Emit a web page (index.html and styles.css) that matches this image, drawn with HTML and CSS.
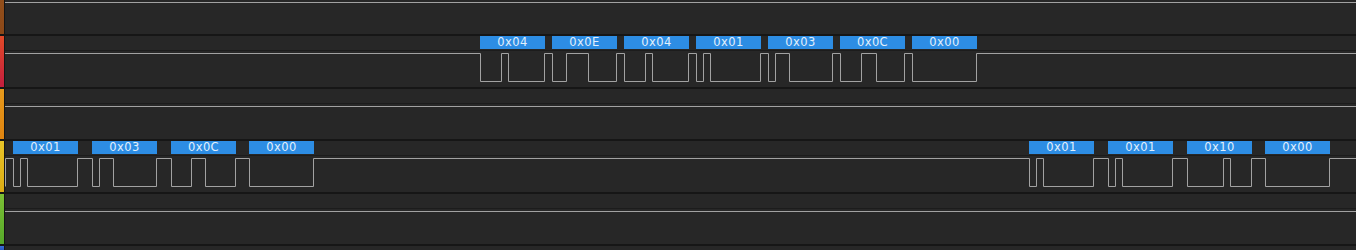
FILE: index.html
```html
<!DOCTYPE html>
<html>
<head>
<meta charset="utf-8">
<link rel="stylesheet" href="styles.css">
</head>
<body>
<div class="channels">
  <div class="channel ch0">
    <div class="strip"></div>
    <div class="lane">
      <div class="band"></div>
      <div class="wave"><div class="flat"></div></div>
    </div>
  </div>

  <div class="channel ch1">
    <div class="strip"></div>
    <div class="lane">
      <div class="band">
        <span class="byte" style="left:475px">0x04</span>
        <span class="byte" style="left:547px">0x0E</span>
        <span class="byte" style="left:619px">0x04</span>
        <span class="byte" style="left:691px">0x01</span>
        <span class="byte" style="left:763px">0x03</span>
        <span class="byte" style="left:835px">0x0C</span>
        <span class="byte" style="left:907px">0x00</span>
      </div>
      <div class="wave">
        <svg class="sig" viewBox="5 0 1351 35" width="1351" height="35">
          <polyline points="5,2.5 480.5,2.5 480.5,30.5 501.5,30.5 501.5,2.5 508.5,2.5 508.5,30.5 544.5,30.5 544.5,2.5 552.5,2.5 552.5,30.5 566.5,30.5 566.5,2.5 588.5,2.5 588.5,30.5 616.5,30.5 616.5,2.5 624.5,2.5 624.5,30.5 645.5,30.5 645.5,2.5 652.5,2.5 652.5,30.5 688.5,30.5 688.5,2.5 696.5,2.5 696.5,30.5 703.5,30.5 703.5,2.5 710.5,2.5 710.5,30.5 760.5,30.5 760.5,2.5 768.5,2.5 768.5,30.5 775.5,30.5 775.5,2.5 789.5,2.5 789.5,30.5 832.5,30.5 832.5,2.5 840.5,2.5 840.5,30.5 861.5,30.5 861.5,2.5 876.5,2.5 876.5,30.5 904.5,30.5 904.5,2.5 912.5,2.5 912.5,30.5 976.5,30.5 976.5,2.5 1356,2.5"/>
        </svg>
      </div>
    </div>
  </div>

  <div class="channel ch2">
    <div class="strip"></div>
    <div class="lane">
      <div class="band"></div>
      <div class="wave"><div class="flat"></div></div>
    </div>
  </div>

  <div class="channel ch3">
    <div class="strip"></div>
    <div class="lane">
      <div class="band">
        <span class="byte" style="left:8px">0x01</span>
        <span class="byte" style="left:87px">0x03</span>
        <span class="byte" style="left:166px">0x0C</span>
        <span class="byte" style="left:244px">0x00</span>
        <span class="byte" style="left:1024px">0x01</span>
        <span class="byte" style="left:1103px">0x01</span>
        <span class="byte" style="left:1182px">0x10</span>
        <span class="byte" style="left:1260px">0x00</span>
      </div>
      <div class="wave">
        <svg class="sig" viewBox="5 0 1351 35" width="1351" height="35">
          <polyline points="5.5,30.5 5.5,2.5 13.5,2.5 13.5,30.5 20.5,30.5 20.5,2.5 27.5,2.5 27.5,30.5 77.5,30.5 77.5,2.5 92.5,2.5 92.5,30.5 99.5,30.5 99.5,2.5 113.5,2.5 113.5,30.5 156.5,30.5 156.5,2.5 171.5,2.5 171.5,30.5 191.5,30.5 191.5,2.5 205.5,2.5 205.5,30.5 235.5,30.5 235.5,2.5 249.5,2.5 249.5,30.5 313.5,30.5 313.5,2.5 1029.5,2.5 1029.5,30.5 1036.5,30.5 1036.5,2.5 1043.5,2.5 1043.5,30.5 1093.5,30.5 1093.5,2.5 1108.5,2.5 1108.5,30.5 1115.5,30.5 1115.5,2.5 1122.5,2.5 1122.5,30.5 1172.5,30.5 1172.5,2.5 1187.5,2.5 1187.5,30.5 1223.5,30.5 1223.5,2.5 1230.5,2.5 1230.5,30.5 1251.5,30.5 1251.5,2.5 1265.5,2.5 1265.5,30.5 1329.5,30.5 1329.5,2.5 1356,2.5"/>
        </svg>
      </div>
    </div>
  </div>

  <div class="channel ch4">
    <div class="strip"></div>
    <div class="lane">
      <div class="band"></div>
      <div class="wave"><div class="flat"></div></div>
    </div>
  </div>

  <div class="channel ch5">
    <div class="strip"></div>
    <div class="lane">
      <div class="band"></div>
    </div>
  </div>
</div>
</body>
</html>
```
FILE: styles.css
```css
html, body {
  margin: 0;
  padding: 0;
  width: 1356px;
  height: 250px;
  overflow: hidden;
  background: #272727;
}

.channels {
  display: flex;
  flex-direction: column;
}

.channel {
  display: flex;
  border-top: 2px solid #161616;
  box-sizing: border-box;
  flex: none;
  overflow: hidden;
}

.ch0 { height: 51px; margin-top: -17px; }
.ch1 { height: 53px; }
.ch2 { height: 52px; }
.ch3 { height: 53px; }
.ch4 { height: 52px; }
.ch5 { height: 6px; }

.strip {
  width: 4px;
  flex: none;
  border-right: 1px solid #141414;
}

.ch0 .strip { background: linear-gradient(to bottom, #96521c, #8c4818); }
.ch1 .strip { background: linear-gradient(to bottom, #e24a28, #c41e3e); }
.ch2 .strip { background: linear-gradient(to bottom, #e69a1c, #df8410); }
.ch3 .strip { background: linear-gradient(to bottom, #e8c428, #dcac14); }
.ch4 .strip { background: linear-gradient(to bottom, #7cc034, #56a82a); }
.ch5 .strip { background: linear-gradient(to bottom, #3a6ed8, #2a58c0); }

.lane {
  flex: 1;
  display: flex;
  flex-direction: column;
  min-width: 0;
}

.band {
  height: 14px;
  flex: none;
  border-bottom: 1px solid #1c1c1c;
  position: relative;
  background: #272727;
}

.wave {
  flex: 1;
  background: #272727;
  overflow: hidden;
}

.flat {
  height: 1px;
  margin-top: 2px;
  background: #a2a2a2;
}

.sig {
  display: block;
}

.sig polyline {
  fill: none;
  stroke: #a2a2a2;
  stroke-width: 1;
}

.byte {
  position: absolute;
  top: 0;
  width: 65px;
  height: 13px;
  background: #2d8de4;
  color: #e2f0fc;
  font-family: "DejaVu Sans", Verdana, sans-serif;
  font-size: 11.5px;
  letter-spacing: 0.4px;
  line-height: 13px;
  text-align: center;
}
```
